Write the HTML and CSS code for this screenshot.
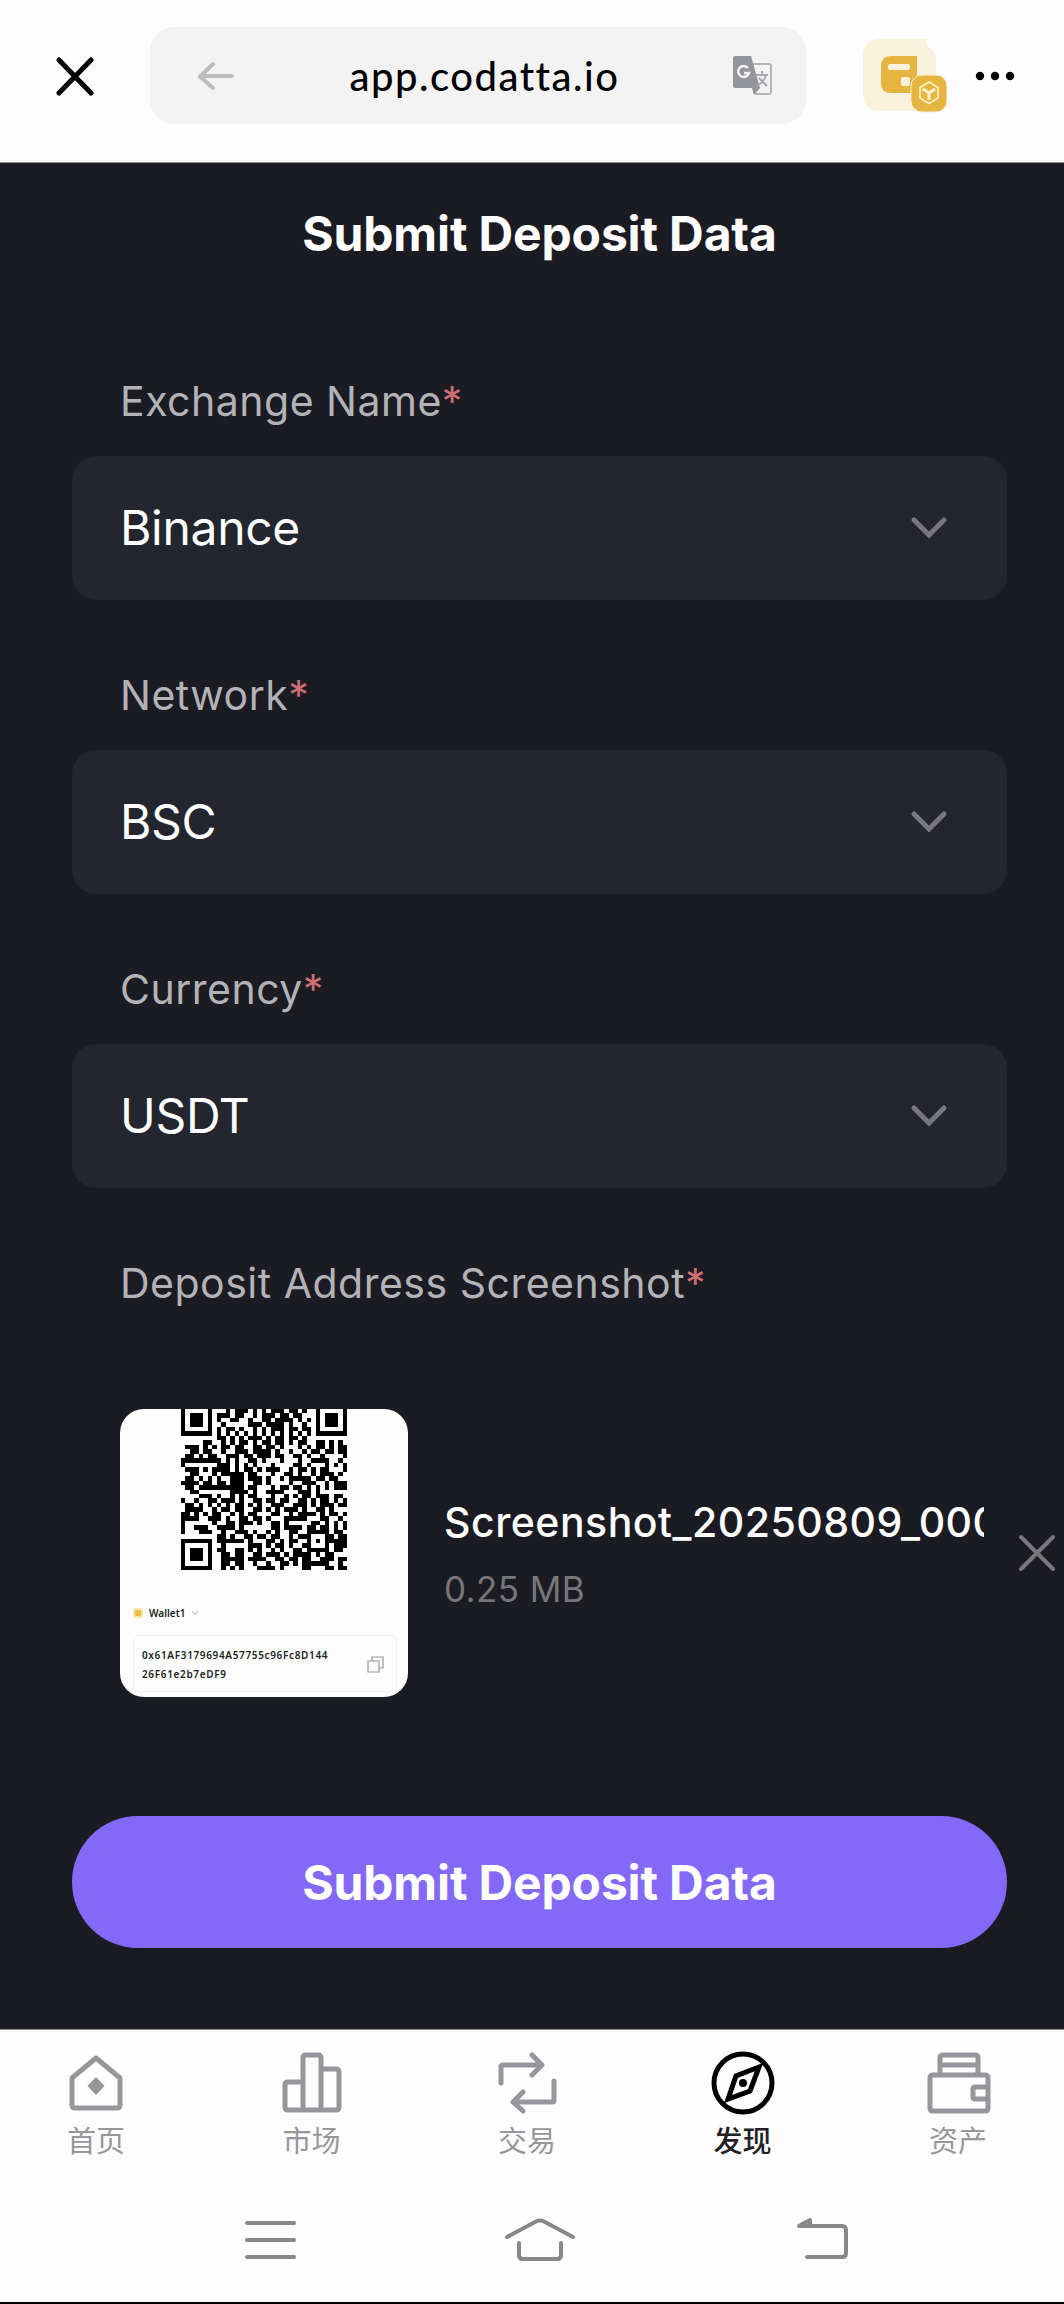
FILE: index.html
```html
<!DOCTYPE html>
<html lang="zh-CN">
<head>
    <meta charset="UTF-8">
    <meta name="viewport" content="width=device-width, initial-scale=1.0">
    <title>Submit Deposit Data</title>
    <link rel="stylesheet" href="styles.css">
</head>
<body>

    <header class="browser-bar">
        <svg class="close" width="40" height="40" viewBox="0 0 40 40"><path d="M4 4L36 37M36 4L4 37"/></svg>
        <div class="address">
            <svg class="back" width="38" height="30" viewBox="0 0 38 30"><path d="M16 3L3 15.500L16 27M3 15H35"/></svg>
            <span class="url">app.codatta.io</span>
            <svg class="translate" width="42" height="42" viewBox="0 0 42 42">
                <path d="M20 9H37Q39 9 39 11V37Q39 39 37 39H23" fill="none" stroke="#b5b6ba" stroke-width="2"/>
                <path d="M3 1H19L28 33L22 40L20 33H3Q1 33 1 31V3Q1 1 3 1Z" fill="#93959b"/>
                <path d="M24 20H36M30 16V20M34 20Q32 27 25 31M27 23L35 31" fill="none" stroke="#a5a7ac" stroke-width="2"/>
                <path d="M16 13A5.500 5.500 0 1 0 17 18H12" fill="none" stroke="#f3f3f3" stroke-width="2.500"/>
            </svg>
        </div>
        <svg class="wallet" width="86" height="74" viewBox="0 0 86 74">
            <path d="M18 0H63L65 8Q73 12 73 22V55L55 72H18Q0 72 0 54V18Q0 0 18 0Z" fill="#faf2dc"/>
            <path d="M28 17H54V54H28Q18 54 18 44V27Q18 17 28 17Z" fill="#e5b53f"/>
            <rect x="25" y="25" width="22" height="6" rx="2" fill="#faf2dc"/>
            <rect x="38" y="38" width="9" height="9" rx="2" fill="#faf2dc"/>
            <rect x="48" y="36" width="36" height="37" rx="11" fill="#e5b53f" stroke="#faf2dc"/>
            <g fill="none" stroke="#fff3cf" stroke-width="1.600">
                <path d="M66 43L75 48.500V59L66 64.500L57 59V48.500Z"/>
                <path d="M60 50L66 54L72 50M66 54V61" stroke-width="3"/>
            </g>
        </svg>
        <svg class="more" width="42" height="12" viewBox="0 0 42 12"><circle cx="6" cy="6" r="4.200"/><circle cx="21" cy="6" r="4.200"/><circle cx="36" cy="6" r="4.200"/></svg>
    </header>

    <main>
        <h1>Submit Deposit Data</h1>

        <div class="field">
            <div class="label">Exchange Name<span>*</span></div>
            <div class="select">Binance
                <svg width="38" height="24" viewBox="0 0 38 24"><path d="M4 4L19 19L34 4"/></svg>
            </div>
        </div>

        <div class="field">
            <div class="label">Network<span>*</span></div>
            <div class="select">BSC
                <svg width="38" height="24" viewBox="0 0 38 24"><path d="M4 4L19 19L34 4"/></svg>
            </div>
        </div>

        <div class="field">
            <div class="label">Currency<span>*</span></div>
            <div class="select">USDT
                <svg width="38" height="24" viewBox="0 0 38 24"><path d="M4 4L19 19L34 4"/></svg>
            </div>
        </div>

        <div class="label">Deposit Address Screenshot<span>*</span></div>

        <div class="upload">
            <div class="thumb">
                <svg class="qr" width="166" height="161" viewBox="0 1 37 36" preserveAspectRatio="none" shape-rendering="crispEdges"><path id="qr"/></svg>
                <div class="wallet-name">
                    <i></i>Wallet1
                    <svg width="8" height="6" viewBox="0 0 8 6"><path d="M1 1L4 4.500L7 1" fill="none" stroke="#aaa"/></svg>
                </div>
                <div class="wallet-address">
                    <span>0x61AF3179694A57755c96Fc8D144<br>26F61e2b7eDF9</span>
                    <svg width="17" height="17" viewBox="0 0 17 17"><path d="M1 5H12V16H1ZM5 5V1H16V12H12" fill="none" stroke="#96969b" stroke-width="1.200"/></svg>
                </div>
            </div>
            <div class="file">
                <div class="file-name">Screenshot_20250809_000</div>
                <div class="file-size">0.25 MB</div>
            </div>
            <svg class="remove" width="38" height="38" viewBox="0 0 38 38"><path d="M3 3L35 35M35 3L3 35"/></svg>
        </div>

        <button class="submit">Submit Deposit Data</button>
    </main>

    <footer>
        <nav class="tabs">
            <div class="tab">
                <svg width="66" height="66" viewBox="0 0 66 66">
                    <path d="M33 8L57 28V55Q57 58 54 58H12Q9 58 9 55V28Z"/>
                    <path d="M33 27L41.500 36L33 45L24.500 36Z" fill="#96979b" stroke="none"/>
                </svg>
                首页
            </div>
            <div class="tab">
                <svg width="66" height="66" viewBox="0 0 66 66"><path d="M24 60V8Q24 5 27 5H39Q42 5 42 8V60M24 32H9Q6 32 6 35V57Q6 60 9 60H57Q60 60 60 57V22Q60 19 57 19H42"/></svg>
                市场
            </div>
            <div class="tab">
                <svg width="66" height="66" viewBox="0 0 66 66"><path d="M7 33V17Q7 15 9 15H47M38 5L48 15L38 25M60 31V50Q60 52 58 52H20M29 42L19 52L29 61"/></svg>
                交易
            </div>
            <div class="tab active">
                <svg width="66" height="66" viewBox="0 0 66 66">
                    <circle cx="33" cy="33" r="29"/>
                    <path d="M49 17L26 26L18 49L40 41Z"/>
                    <circle cx="33" cy="33" r="4" fill="#000" stroke="none"/>
                </svg>
                发现
            </div>
            <div class="tab">
                <svg width="66" height="66" viewBox="0 0 66 66"><path d="M15 24V8Q15 5 18 5H50Q53 5 53 8V24M15 15H53M8 25H60Q63 25 63 28V58Q63 61 60 61H8Q5 61 5 58V28Q5 25 8 25ZM63 37H50Q48 37 48 39V47Q48 49 50 49H63"/></svg>
                资产
            </div>
        </nav>
        <div class="system-nav">
            <svg width="72" height="50" viewBox="0 0 72 50"><path d="M13 5H60M13 22H60M13 39H60"/></svg>
            <svg width="72" height="50" viewBox="0 0 72 50"><path d="M3 19L31 4Q36 1 41 4L69 19M15 25V37Q15 41 19 41H53Q57 41 57 37V25"/></svg>
            <svg width="72" height="50" viewBox="0 0 72 50"><path d="M22 39H57Q61 39 61 35V12Q61 8 57 8H14L25 2V8"/></svg>
        </div>
    </footer>

    <script>
        // one string per row of modules, the top row is hidden by the crop of the thumbnail
        const rows = [
            '#.....#...#.###.#.#.###.##.#..#.....#',
            '#.###.#.###.##..#.###.##.##...#.###.#',
            '#.###.#.#..##..#..##.####.#.#.#.###.#',
            '#.###.#..#.....###.####.#..#..#.###.#',
            '#.....#.#.##.#..#.#.###.##.##.#.....#',
            '#######.#.#.#.#.#.#.#.#.#.#.#.#######',
            '........##.#.#.###.#.##.##.#.........',
            '.....##..#.#.##.#.##.##.#.##..##.#.#.',
            '.###.#.#.##.##..##.##.#...#.#.##.#.##',
            '..##.##..#..###.####.#..#..#.##.##.##',
            '.##.#.##..###.##.###.##..##.#..#....#',
            '#########.#.#..##.#...#...#..####..#.',
            '#.......###.#.#.#...#....##.#...#.#.#',
            '.###.#.####.#.##.#.###..#.##.#.##...#',
            '..##...#.#####.##...#..##.#..#.###.#.',
            '.##.#.#.#..###.###.#..#.#####.##.##..',
            '####.##.##.###..##.#....#..###..#.###',
            '.##.##########.##...#.##.##.#.#.#.###',
            '..##.......####.#..####...###.#......',
            '....###.#..#.#.##...#..#.#.##.###.##.',
            '#..#..##.###.#..##.##.##..##.#.##.#.#',
            '.##.#.#.#.#.##.#.#..###..###.#.###.##',
            '.####..#.##.##..##.#.#.###.#..##.#...',
            '##.#.#.##..#.#.##...##..#.####.#.##.#',
            '####..###.#..##.##.#...#####...##..#.',
            '#......#..##.###.#..##.#.....##.#.#.#',
            '#..###..####.#......##.####.##.##.#.#',
            '#...###..#..###.#..#.#..##..#####.##.',
            '........##.#..##.##.##..#.###...##.##',
            '#######.######.#...##.#.##..#.#.#####',
            '#.....#..#.....###.#.##.#..##...#.###',
            '#.###.#.##..##.#.#..#.#..##.#####.##.',
            '#.###.#..##.##..##.###.#.####.#.##...',
            '#.###.#..#####.####..##.##.##..###.##',
            '#.....#..##.##..#..#..##.#.######..#.',
            '#######..#.#.#...####.#....##...##.##'
        ];

        let d = '';
        rows.forEach((row, y) => {
            for (let x = 0; x < row.length; x++) {
                if (row[x] === '#') d += `M${x} ${y + 1}h1v1h-1z`;
            }
        });
        document.getElementById('qr').setAttribute('d', d);
    </script>

</body>
</html>
```
FILE: styles.css
```css
* {
    box-sizing: border-box;
}

body {
    margin: 0;
    width: 1064px;
    height: 2304px;
    display: flex;
    flex-direction: column;
    overflow: hidden;
    background-color: #1b1b23;
    font-family: Inter, "Noto Sans CJK SC", sans-serif;
}

svg {
    display: block;
    flex: none;
}

.browser-bar {
    height: 163px;
    padding: 27px 0 38px 55px;
    display: flex;
    align-items: center;
    background-color: #fdfdfd;
    border-bottom: 1px solid #8b8b8f;
}

.close path {
    fill: none;
    stroke: #000;
    stroke-width: 5;
    stroke-linecap: round;
}

.address {
    width: 656px;
    height: 97px;
    margin-left: 55px;
    padding: 0 32px 0 47px;
    display: flex;
    align-items: center;
    justify-content: space-between;
    background-color: #f3f3f3;
    border-radius: 24px;
}

.back path {
    fill: none;
    stroke: #bcbcbe;
    stroke-width: 4;
    stroke-linecap: round;
    stroke-linejoin: round;
}

.url {
    padding-left: 2px;
    font-family: Lato, sans-serif;
    font-size: 40px;
    font-weight: 500;
    letter-spacing: 1.5px;
}

.wallet {
    margin-left: 57px;
}

.more {
    margin-left: 25px;
}

main {
    height: 1866px;
    padding: 42px 57px 0 72px;
}

h1 {
    margin: 0 0 98px;
    color: #fff;
    font-size: 48px;
    line-height: 58px;
    font-weight: 700;
    letter-spacing: -0.15px;
    text-align: center;
}

.field {
    margin-bottom: 55px;
}

.label {
    height: 95px;
    padding: 13px 48px 0;
    color: #b3b3b7;
    font-size: 41px;
    line-height: 54px;
    letter-spacing: 0.5px;
}

.label span {
    color: #cf6e70;
}

.select {
    height: 144px;
    padding: 0 59px 1px 48px;
    display: flex;
    align-items: center;
    justify-content: space-between;
    background-color: #23252f;
    border-radius: 24px;
    color: #fff;
    font-size: 48px;
    letter-spacing: -0.3px;
}

.select path {
    fill: none;
    stroke: #77777c;
    stroke-width: 5;
    stroke-linecap: round;
}

.upload {
    height: 288px;
    margin: 71px -57px 119px 48px;
    display: flex;
    align-items: center;
}

.thumb {
    width: 288px;
    height: 288px;
    flex: none;
    padding: 0 11px 0 13px;
    overflow: hidden;
    background-color: #fdfdfd;
    border-radius: 24px;
    font-family: "Noto Sans", sans-serif;
    color: #222;
}

.qr {
    margin-left: 48px;
}

.wallet-name {
    height: 65px;
    padding-top: 21px;
    display: flex;
    align-items: center;
    gap: 6px;
    font-size: 10px;
    font-weight: 600;
}

.wallet-name i {
    width: 10px;
    height: 10px;
    background-color: #edbd45;
    border: 2px solid #fae6a8;
    border-radius: 3px;
}

.wallet-address {
    height: 57px;
    padding: 2px 12px 0 8px;
    display: flex;
    align-items: center;
    justify-content: space-between;
    border: 1px solid #f2f2f3;
    border-radius: 6px;
    font-size: 10px;
    line-height: 19px;
    font-weight: 600;
    letter-spacing: 0.65px;
}

.file {
    width: 540px;
    margin: 2px 0 0 36px;
}

.file-name {
    overflow: hidden;
    white-space: nowrap;
    color: #fff;
    font-size: 41px;
    line-height: 60px;
    font-weight: 500;
    letter-spacing: 0.5px;
}

.file-size {
    margin-top: 10px;
    color: #76767b;
    font-size: 35px;
    line-height: 54px;
    letter-spacing: 0.4px;
}

.remove {
    margin-left: 34px;
}

.remove path {
    fill: none;
    stroke: #77777c;
    stroke-width: 4;
    stroke-linecap: round;
}

.submit {
    display: block;
    width: 935px;
    height: 132px;
    padding: 0;
    background-color: #8468f7;
    border: none;
    border-radius: 66px;
    color: #fff;
    font-family: inherit;
    font-size: 48px;
    font-weight: 700;
    letter-spacing: -0.15px;
}

footer {
    height: 275px;
    background-color: #fdfdfd;
    border-top: 1px solid #8b8b8f;
    border-bottom: 2px solid #000;
}

.tabs {
    height: 170px;
    padding: 20px 56px 0 46px;
    display: flex;
    justify-content: space-between;
}

.tab {
    width: 100px;
    display: flex;
    flex-direction: column;
    align-items: center;
    gap: 3px;
    color: #96979b;
    font-family: "Noto Sans CJK SC", sans-serif;
    font-size: 29px;
    line-height: 40px;
}

.tab svg {
    fill: none;
    stroke: #96979b;
    stroke-width: 5;
    stroke-linecap: round;
    stroke-linejoin: round;
}

.active {
    color: #222226;
    font-weight: 500;
}

.active svg {
    stroke: #000;
    stroke-linejoin: miter;
}

.system-nav {
    padding: 18px 0 0 234px;
    display: flex;
    gap: 198px;
}

.system-nav svg:last-child {
    margin-left: 11px;
}

.system-nav path {
    fill: none;
    stroke: #88888b;
    stroke-width: 4;
    stroke-linecap: round;
    stroke-linejoin: round;
}
```
